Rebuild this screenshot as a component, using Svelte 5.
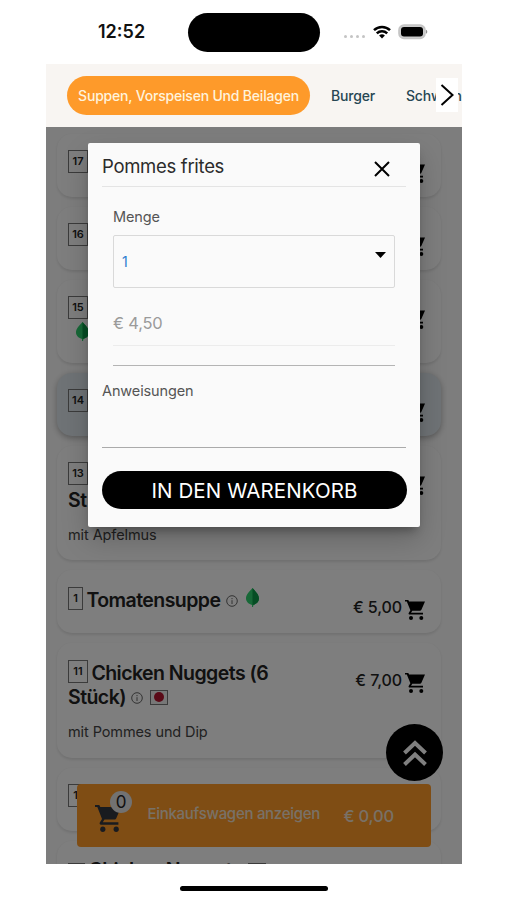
<script>
  const items = [
    { no: '17', name: '', price: '', h: 63 },
    { no: '16', name: '', price: '', h: 63 },
    { no: '15', name: '', price: '', h: 83, leaf: true, below: true },
    { no: '14', name: '', price: '', h: 63, active: true },
    { no: '13', name: 'St', price: '', h: 114.5, note: 'mit Apfelmus', below: true },
    { no: '1', name: 'Tomatensuppe', price: '€ 5,00', h: 63, info: true, leaf: true },
    { no: '11', name: 'Chicken Nuggets (6 Stück)', price: '€ 7,00', h: 114.5, info: true, flag: true, note: 'mit Pommes und Dip' },
    { no: '1', name: '', price: '', h: 63 },
    { no: '', name: 'Chicken Nuggets', price: '', h: 63, flag: true }
  ];
</script>

{#snippet cart(width, height)}
  <svg class="cart" {width} {height} viewBox="0 0 20 20" preserveAspectRatio="none" fill="currentColor">
    <path d="M0 0h3.300l.8 1.500H20l-3.600 8.300c-.3.700-.8 1-1.500 1H7.300L6 12.800h12v1.800H4.600c-.9 0-1.300-.9-.9-1.600l1.700-2.700L1.800 1.500H0Z" />
    <circle cx="6" cy="18" r="2" /><circle cx="16.300" cy="18" r="2" />
  </svg>
{/snippet}

{#snippet leaf()}
  <svg class="leaf" width="15" height="20" viewBox="0 0 15 20">
    <path d="M7.500 1C11 5 14 7.500 14 11.500c0 3.500-2.500 5.500-5.500 6.500l-.5 2H7v-2C4 17 1 15 1 11.500 1 7.500 4 5 7.500 1Z" fill="#2fd06e" />
    <path d="M7.500 1C11 5 14 7.500 14 11.500c0 3.500-2.500 5.500-6.500 6.500Z" fill="#0d9a48" />
  </svg>
{/snippet}

<div class="phone">
  <div class="status">
    <span class="time">12:52</span>
    <span class="island"></span>
    <span class="dots"><i></i><i></i><i></i><i></i></span>
    <svg class="wifi" width="18" height="14" viewBox="0 0 18 14" fill="none" stroke="#000" stroke-width="2.500">
      <path d="M1 5.200a11.500 11.500 0 0 1 16 0M3.800 8.300a7.500 7.500 0 0 1 10.400 0" />
      <path d="M9 13.500 6.100 10.600a4.200 4.200 0 0 1 5.800 0Z" fill="#000" stroke="none" />
    </svg>
    <svg class="battery" width="30" height="16" viewBox="0 0 30 16">
      <rect x="1" y="1" width="26" height="13.500" rx="5" fill="#ccc" stroke="#c4c4c4" stroke-width="1.600" />
      <rect x="3" y="3" width="22" height="9.600" rx="3" fill="#000" />
      <path d="M28.200 5.800c1.400.6 1.400 3.400 0 4Z" fill="#777" />
    </svg>
  </div>

  <div class="screen">
    <nav>
      <span class="pill">Suppen, Vorspeisen Und Beilagen</span>
      <span class="tab burger">Burger</span>
      <span class="tab next">Schweinefleisch</span>
      <span class="scroll">
        <svg width="22" height="34" viewBox="0 0 22 34" fill="none" stroke="#000" stroke-width="2"><path d="m5.500 7 11 10-11 10" /></svg>
      </span>
    </nav>

    <div class="list">
      {#each items as it}
        <article class:active={it.active} style="height:{it.h}px">
          <div class="main">
            <h3>
              <span class="no" class:slim={it.no.length === 1}>{it.no}</span>{#if it.below}<br />{/if}
              <span class="name">{it.name}</span>
              {#if it.info}
                <svg class="info" width="12" height="12" viewBox="0 0 12 12" fill="none" stroke="#666"><circle cx="6" cy="6" r="5.300" /><path d="M6 5.200V9M6 3v1.200" /></svg>
              {/if}
              {#if it.leaf}<span class:indent={it.below}>{@render leaf()}</span>{/if}
              {#if it.flag}<span class="flag"><b></b></span>{/if}
            </h3>
            {#if it.note}<p>{it.note}</p>{/if}
          </div>
          <div class="price">{it.price}{@render cart(20, 20)}</div>
        </article>
      {/each}
    </div>

    <div class="basket">
      <span class="bcart">{@render cart(26, 27)}<em>0</em></span>
      <span class="blabel">Einkaufswagen anzeigen</span>
      <span class="bsum">€ 0,00</span>
    </div>

    <div class="up">
      <svg width="26" height="28" viewBox="0 0 26 28" fill="none" stroke="#fff" stroke-width="4"><path d="M2.500 14 13 4l10.500 10M2.500 25.500 13 15.500l10.500 10" /></svg>
    </div>

    <div class="shade"></div>

    <section class="dialog">
      <header>
        <h2>Pommes frites</h2>
        <svg width="16" height="16" viewBox="0 0 16 16" stroke="#000" stroke-width="2"><path d="m1 1 14 14M15 1 1 15" /></svg>
      </header>
      <div class="fields">
        <div class="label">Menge</div>
        <div class="select"><span>1</span><svg width="11" height="6" viewBox="0 0 11 6"><path d="M0 0h11L5.500 6Z" /></svg></div>
        <div class="amount">€ 4,50</div>
      </div>
      <div class="notes">Anweisungen</div>
      <button>IN DEN WARENKORB</button>
    </section>
  </div>
  <div class="home"></div>
</div>

<style>
  :global(body) { background: #fff; }
  * { box-sizing: border-box; }
  .phone { width: 507px; height: 900px; overflow: hidden; font-family: Inter, Roboto, sans-serif; color: #222; background: #fff; }
  .status { height: 64px; display: flex; align-items: center; }
  .time { margin: -1px 0 0 98px; width: 90px; font-size: 18px; font-weight: 600; letter-spacing: 0; color: #111; }
  .island { width: 132px; height: 39px; border-radius: 20px; background: #000; }
  .dots { display: flex; gap: 3px; margin: 9px 0 0 24px; width: 29px; }
  .dots i { width: 3px; height: 3px; border-radius: 50%; background: #c4c4c4; }
  .wifi { margin-top: -1px; }
  .battery { margin-left: 7px; }
  .screen { position: relative; width: 416px; height: 800px; margin-left: 46px; overflow: hidden; background: #f5f5f5; }
  nav { height: 63px; display: flex; align-items: center; position: relative; background: #f8f5f2; font-size: 14px; font-weight: 500; color: #274653; white-space: nowrap; overflow: hidden; }
  .tab { letter-spacing: -0.2px; margin-top: -1px; }
  .pill { margin: -1px 0 0 21px; width: 243px; height: 39px; line-height: 39px; flex: none; text-align: center; border-radius: 20px; background: #fe9a2a; color: #fff3dc; letter-spacing: -0.2px; }
  .burger { margin-left: 21px; width: 75px; flex: none; }
  .scroll { position: absolute; left: 390px; top: 14px; width: 22px; height: 34px; background: #fff; }
  .list { height: 737px; padding: 6.500px 21px 0 11px; display: flex; flex-direction: column; gap: 10px; overflow: hidden; background: #fbfbfb; }
  article { flex: none; display: flex; justify-content: space-between; padding: 17.500px 16px 0 11px; border-radius: 15px; background: #fdfdfd; box-shadow: 0 1.500px 3px rgba(0, 0, 0, .1); }
  article.active { background: #dfe7ec; box-shadow: 0 2px 6px rgba(0, 0, 0, .3); }
  .main { width: 222px; }
  h3 { margin: 0; font-size: 19.500px; line-height: 24.500px; font-weight: 600; letter-spacing: -0.55px; }
  .name { margin-left: -1px; }
  br + .name { margin-left: 0; }
  .no { display: inline-block; width: 20px; height: 23px; margin: -6px 0; border: 1px solid #777; font-size: 11px; line-height: 20px; font-weight: 600; text-align: center; vertical-align: 5px; letter-spacing: 0; }
  .no.slim { width: 15px; }
  .no:empty { width: 17px; vertical-align: -3px; }
  .info { margin-left: 1px; }
  .leaf { margin: -3px 0 0 3px; }
  .indent { margin-left: 4px; }
  .flag { display: inline-flex; width: 18px; height: 15px; margin-left: 2px; align-items: center; justify-content: center; border: 1px solid #777; background: #eee; vertical-align: 2px; }
  .flag b { width: 10px; height: 10px; border-radius: 50%; background: #b5142e; }
  p { margin: 13.500px 0 0; font-size: 14.500px; line-height: 18px; color: #444; letter-spacing: -0.1px; }
  .price { display: flex; height: 24px; margin-top: 7.500px; align-items: center; font-size: 16px; font-weight: 500; white-space: nowrap; letter-spacing: -0.1px; }
  .price .cart { margin: 5px 0 0 3px; color: #000; }
  .basket { position: absolute; left: 31px; top: 720px; width: 354px; height: 63px; display: flex; align-items: center; border-radius: 4px; background: #fe9a28; color: #f2e2cf; font-weight: 500; }
  .bcart { position: relative; margin: 5px 0 0 18px; width: 52.500px; color: #33363f; height: 27px; }
  .bcart em { position: absolute; left: 15px; top: -14px; width: 22px; height: 22px; border-radius: 50%; background: #e4e4e4; font-style: normal; font-size: 17px; font-weight: 400; line-height: 22px; text-align: center; color: #222; }
  .blabel { width: 196px; font-size: 15px; margin-top: -5px; letter-spacing: -0.28px; }
  .bsum { font-size: 16.500px; letter-spacing: -0.2px; }
  .up { position: absolute; left: 340px; top: 660px; width: 57px; height: 57px; display: flex; align-items: center; justify-content: center; border-radius: 50%; background: #000; }
  .shade { position: absolute; left: 0; top: 63px; width: 416px; height: 737px; background: rgba(0, 0, 0, .5); }
  .dialog { position: absolute; left: 42px; top: 79px; width: 332px; height: 384px; padding: 0 14px; border-radius: 2px; background: #fafafa; box-shadow: 0 7px 9px -4px rgba(0, 0, 0, .3), 0 12px 28px rgba(0, 0, 0, .2); }
  header { height: 44px; display: flex; align-items: center; justify-content: space-between; padding: 3px 16px 0 0; border-bottom: 1px solid #e4e4e4; }
  header svg { margin-top: 5px; }
  h2 { margin: 0; font-size: 18.500px; font-weight: 400; letter-spacing: -0.3px; color: #2b2b2b; }
  .fields { height: 179px; margin: 0 11px; border-bottom: 1px solid #b4b4b4; }
  .label { height: 48px; padding-top: 20px; font-size: 14.500px; line-height: 20px; letter-spacing: -0.1px; color: #555; }
  .select { height: 53px; border: 1.500px solid #d9d9d9; border-radius: 2px; padding: 0 8px; display: flex; justify-content: space-between; font-size: 14px; line-height: 52px; color: #2d7ed0; }
  .select svg { margin-top: 16px; fill: #000; }
  .amount { height: 58px; padding-top: 23px; border-bottom: 1px solid #ececec; font-size: 16.500px; line-height: 24px; letter-spacing: -0.2px; color: #9a9a9a; }
  .notes { height: 82px; padding-top: 15px; border-bottom: 1px solid #aaa; font-size: 14.500px; line-height: 20px; letter-spacing: -0.12px; color: #555; }
  button { display: block; width: 305px; height: 38px; margin-top: 23px; padding: 0; border: 0; border-radius: 19px; background: #000; color: #fff; font: 400 20.500px Inter, Roboto, sans-serif; letter-spacing: 0.1px; }
  .home { width: 148px; height: 5px; margin: 22px 0 0 180px; border-radius: 3px; background: #000; }
</style>
